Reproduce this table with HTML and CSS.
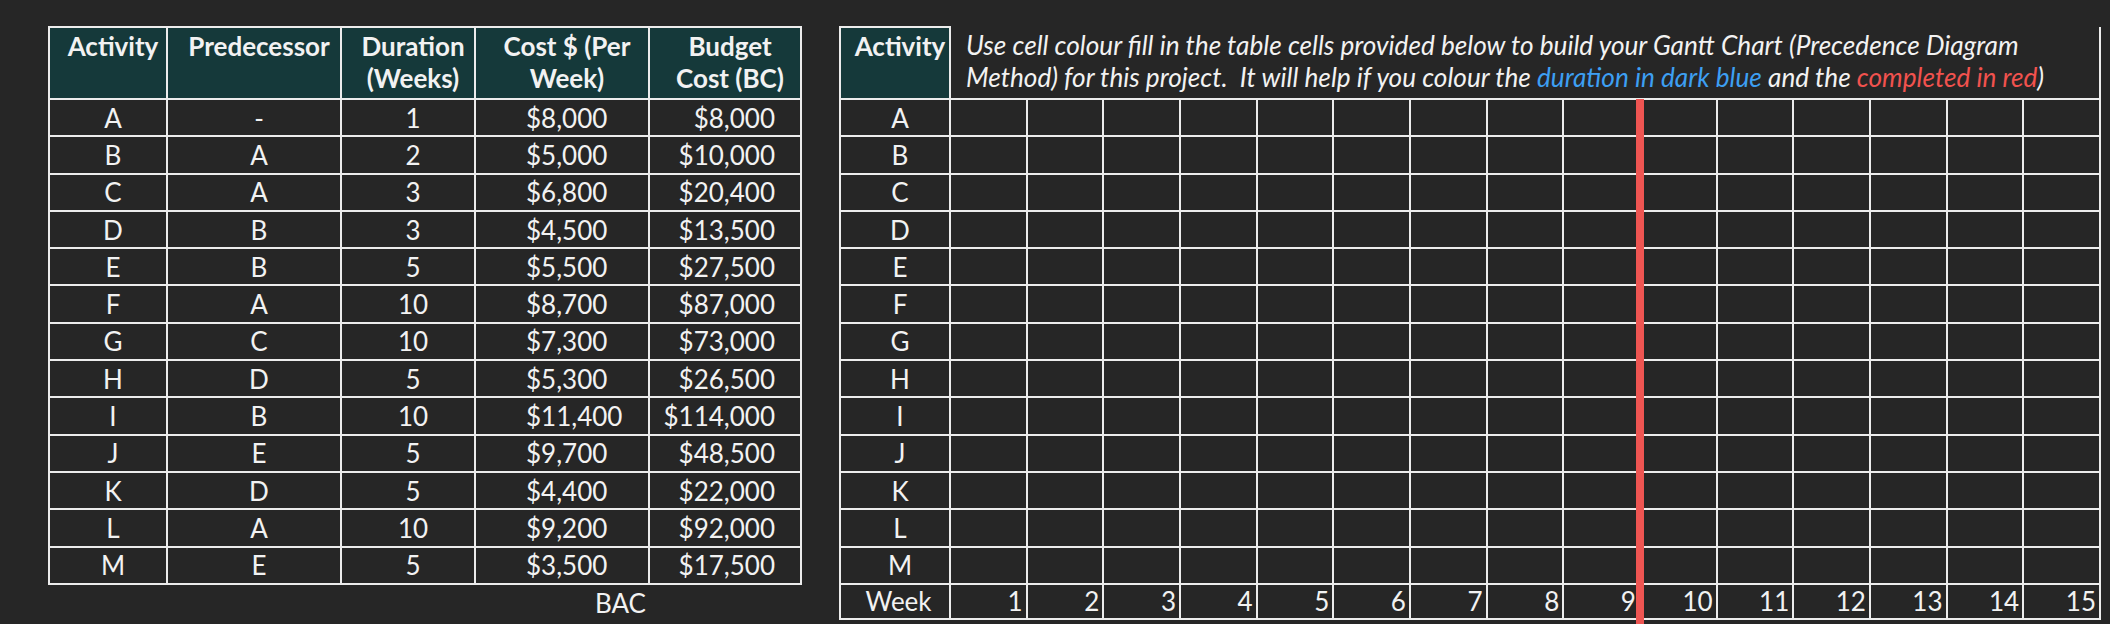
FILE: index.html
```html
<!DOCTYPE html>
<html>
<head>
<meta charset="utf-8">
<title>Gantt Chart Worksheet</title>
<link rel="stylesheet" href="styles.css">
</head>
<body>
<div class="sheet">
  <div class="left">
    <table class="data">
      <colgroup>
        <col class="c-act"><col class="c-pred"><col class="c-dur"><col class="c-cost"><col class="c-bc">
      </colgroup>
      <thead>
        <tr class="head">
          <th>Activity</th>
          <th>Predecessor</th>
          <th>Duration<br>(Weeks)</th>
          <th>Cost $ (Per<br>Week)</th>
          <th>Budget<br>Cost (BC)</th>
        </tr>
      </thead>
      <tbody>
        <tr><td>A</td><td>-</td><td>1</td><td class="cost">$8,000</td><td class="bc">$8,000</td></tr>
        <tr><td>B</td><td>A</td><td>2</td><td class="cost">$5,000</td><td class="bc">$10,000</td></tr>
        <tr><td>C</td><td>A</td><td>3</td><td class="cost">$6,800</td><td class="bc">$20,400</td></tr>
        <tr><td>D</td><td>B</td><td>3</td><td class="cost">$4,500</td><td class="bc">$13,500</td></tr>
        <tr><td>E</td><td>B</td><td>5</td><td class="cost">$5,500</td><td class="bc">$27,500</td></tr>
        <tr><td>F</td><td>A</td><td>10</td><td class="cost">$8,700</td><td class="bc">$87,000</td></tr>
        <tr><td>G</td><td>C</td><td>10</td><td class="cost">$7,300</td><td class="bc">$73,000</td></tr>
        <tr><td>H</td><td>D</td><td>5</td><td class="cost">$5,300</td><td class="bc">$26,500</td></tr>
        <tr><td>I</td><td>B</td><td>10</td><td class="cost">$11,400</td><td class="bc">$114,000</td></tr>
        <tr><td>J</td><td>E</td><td>5</td><td class="cost">$9,700</td><td class="bc">$48,500</td></tr>
        <tr><td>K</td><td>D</td><td>5</td><td class="cost">$4,400</td><td class="bc">$22,000</td></tr>
        <tr><td>L</td><td>A</td><td>10</td><td class="cost">$9,200</td><td class="bc">$92,000</td></tr>
        <tr><td>M</td><td>E</td><td>5</td><td class="cost">$3,500</td><td class="bc">$17,500</td></tr>
      </tbody>
      <tfoot>
        <tr class="foot"><td colspan="4" class="bac">BAC</td><td class="blank"></td></tr>
      </tfoot>
    </table>
  </div>

  <div class="right">
    <table class="gantt">
      <colgroup>
        <col class="g-act">
        <col class="g-wk"><col class="g-wk"><col class="g-wk"><col class="g-wk"><col class="g-wk">
        <col class="g-wk"><col class="g-wk"><col class="g-wk"><col class="g-wk"><col class="g-wk">
        <col class="g-wk"><col class="g-wk"><col class="g-wk"><col class="g-wk"><col class="g-wk">
      </colgroup>
      <thead>
        <tr class="head">
          <th>Activity</th>
          <td colspan="15" class="note">Use cell colour fill in the table cells provided below to build your Gantt Chart (Precedence Diagram<br>Method) for this project.&nbsp; It will help if you colour the <span class="blue">duration in dark blue</span> and the <span class="red">completed in red</span>)</td>
        </tr>
      </thead>
      <tbody>
        <tr><td class="lbl">A</td><td></td><td></td><td></td><td></td><td></td><td></td><td></td><td></td><td></td><td></td><td></td><td></td><td></td><td></td><td></td></tr>
        <tr><td class="lbl">B</td><td></td><td></td><td></td><td></td><td></td><td></td><td></td><td></td><td></td><td></td><td></td><td></td><td></td><td></td><td></td></tr>
        <tr><td class="lbl">C</td><td></td><td></td><td></td><td></td><td></td><td></td><td></td><td></td><td></td><td></td><td></td><td></td><td></td><td></td><td></td></tr>
        <tr><td class="lbl">D</td><td></td><td></td><td></td><td></td><td></td><td></td><td></td><td></td><td></td><td></td><td></td><td></td><td></td><td></td><td></td></tr>
        <tr><td class="lbl">E</td><td></td><td></td><td></td><td></td><td></td><td></td><td></td><td></td><td></td><td></td><td></td><td></td><td></td><td></td><td></td></tr>
        <tr><td class="lbl">F</td><td></td><td></td><td></td><td></td><td></td><td></td><td></td><td></td><td></td><td></td><td></td><td></td><td></td><td></td><td></td></tr>
        <tr><td class="lbl">G</td><td></td><td></td><td></td><td></td><td></td><td></td><td></td><td></td><td></td><td></td><td></td><td></td><td></td><td></td><td></td></tr>
        <tr><td class="lbl">H</td><td></td><td></td><td></td><td></td><td></td><td></td><td></td><td></td><td></td><td></td><td></td><td></td><td></td><td></td><td></td></tr>
        <tr><td class="lbl">I</td><td></td><td></td><td></td><td></td><td></td><td></td><td></td><td></td><td></td><td></td><td></td><td></td><td></td><td></td><td></td></tr>
        <tr><td class="lbl">J</td><td></td><td></td><td></td><td></td><td></td><td></td><td></td><td></td><td></td><td></td><td></td><td></td><td></td><td></td><td></td></tr>
        <tr><td class="lbl">K</td><td></td><td></td><td></td><td></td><td></td><td></td><td></td><td></td><td></td><td></td><td></td><td></td><td></td><td></td><td></td></tr>
        <tr><td class="lbl">L</td><td></td><td></td><td></td><td></td><td></td><td></td><td></td><td></td><td></td><td></td><td></td><td></td><td></td><td></td><td></td></tr>
        <tr><td class="lbl">M</td><td></td><td></td><td></td><td></td><td></td><td></td><td></td><td></td><td></td><td></td><td></td><td></td><td></td><td></td><td></td></tr>
      </tbody>
      <tfoot>
        <tr class="week">
          <td class="lbl">Week</td>
          <td>1</td><td>2</td><td>3</td><td>4</td><td>5</td><td>6</td><td>7</td><td>8</td><td>9</td><td>10</td><td>11</td><td>12</td><td>13</td><td>14</td><td>15</td>
        </tr>
      </tfoot>
    </table>
    <div class="today"></div>
  </div>
</div>
</body>
</html>
```

FILE: styles.css
```css
* { box-sizing: border-box; }

html, body {
  margin: 0;
  background: #262626;
}

body {
  width: 2110px;
  height: 624px;
  overflow: hidden;
  font-family: Lato, "Liberation Sans", sans-serif;
  color: #f2f2f2;
}

.sheet {
  display: flex;
  align-items: flex-start;
  gap: 37px;
  padding: 26px 0 0 48px;
}

table {
  border-collapse: collapse;
  table-layout: fixed;
}

th, td {
  border: 2px solid #ececec;
  padding: 0;
  font-size: 26px;
  line-height: 30px;
  font-weight: 400;
  white-space: nowrap;
}

th {
  background: #15393a;
  font-weight: 700;
  vertical-align: top;
  text-align: center;
  padding: 2px 0 0 10px;
  line-height: 32px;
}

/* ---------- left data table ---------- */
.data { width: 754px; }
.c-act  { width: 118px; }
.c-pred { width: 174px; }
.c-dur  { width: 134px; }
.c-cost { width: 174px; }
.c-bc   { width: 152px; }

.head { height: 72px; }
tbody tr { height: 37.3px; }

.data td {
  text-align: center;
  vertical-align: middle;
  padding-left: 10px;
}

.data td.cost {
  text-align: left;
  padding-left: 50px;
}

.data td.bc {
  text-align: right;
  padding-right: 25px;
}

.foot { height: 37px; }

.data .foot td {
  border-left: none;
  border-right: none;
  border-bottom: none;
}

.data td.bac {
  text-align: right;
  padding-right: 3px;
}

/* ---------- right gantt table ---------- */
.right { position: relative; }

.gantt { width: 1262px; }
.g-act { width: 110px; }
.g-wk  { width: 76.666px; }

.gantt td.note {
  border-top: none;
  border-left: none;
  vertical-align: top;
  text-align: left;
  white-space: nowrap;
  font-style: italic;
  font-size: 26.2px;
  line-height: 32px;
  padding: 2px 0 0 15px;
}

.blue { color: #3d9ff2; }
.red  { color: #f1524e; }

.gantt td { vertical-align: middle; }

.gantt td.lbl {
  text-align: center;
  padding-left: 10px;
}

.week { height: 35px; }

.week td {
  text-align: right;
  padding-right: 3px;
}

.today {
  position: absolute;
  left: 797px;
  top: 73px;
  width: 8px;
  height: 530px;
  background: #ee5552;
}
```
